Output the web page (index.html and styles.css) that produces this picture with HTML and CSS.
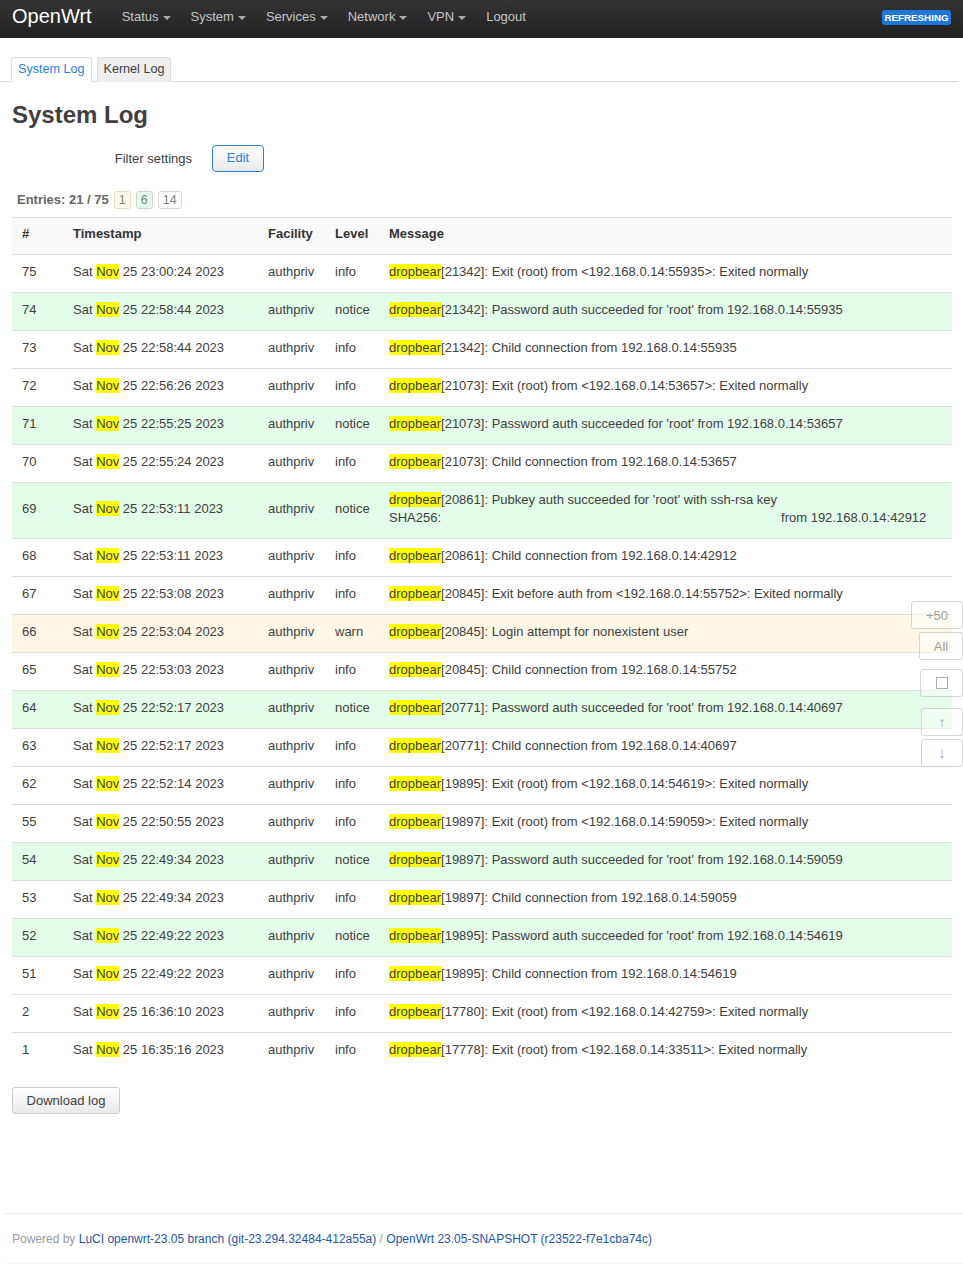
FILE: index.html
```html
<!DOCTYPE html>
<html>
<head>
<meta charset="utf-8">
<title>System Log - OpenWrt</title>
<link rel="stylesheet" href="styles.css">
</head>
<body>
<header class="topbar">
  <a class="brand" href="#">OpenWrt</a>
  <ul class="nav">
    <li><a href="#">Status<span class="caret"></span></a></li>
    <li><a href="#">System<span class="caret"></span></a></li>
    <li><a href="#">Services<span class="caret"></span></a></li>
    <li><a href="#">Network<span class="caret"></span></a></li>
    <li><a href="#">VPN<span class="caret"></span></a></li>
    <li><a href="#">Logout</a></li>
  </ul>
  <span class="refreshing">REFRESHING</span>
</header>

<div class="main">
  <ul class="tabs">
    <li class="tab active"><a href="#">System Log</a></li>
    <li class="tab"><a href="#">Kernel Log</a></li>
  </ul>

  <h2 class="title">System Log</h2>

  <div class="filter-row">
    <label class="filter-label">Filter settings</label>
    <button class="btn btn-edit">Edit</button>
  </div>

  <div class="entries">
    <span class="entries-text">Entries: 21 / 75</span>
    <span class="badge badge-warn">1</span>
    <span class="badge badge-notice">6</span>
    <span class="badge">14</span>
  </div>

  <table class="log">
    <colgroup>
      <col class="c-num"><col class="c-ts"><col class="c-fac"><col class="c-lvl"><col>
    </colgroup>
    <thead>
      <tr><th>#</th><th>Timestamp</th><th>Facility</th><th>Level</th><th>Message</th></tr>
    </thead>
    <tbody>
      <tr><td>75</td><td>Sat <mark>Nov</mark> 25 23:00:24 2023</td><td>authpriv</td><td>info</td><td><mark>dropbear</mark>[21342]: Exit (root) from &lt;192.168.0.14:55935&gt;: Exited normally</td></tr>
      <tr class="notice"><td>74</td><td>Sat <mark>Nov</mark> 25 22:58:44 2023</td><td>authpriv</td><td>notice</td><td><mark>dropbear</mark>[21342]: Password auth succeeded for 'root' from 192.168.0.14:55935</td></tr>
      <tr><td>73</td><td>Sat <mark>Nov</mark> 25 22:58:44 2023</td><td>authpriv</td><td>info</td><td><mark>dropbear</mark>[21342]: Child connection from 192.168.0.14:55935</td></tr>
      <tr><td>72</td><td>Sat <mark>Nov</mark> 25 22:56:26 2023</td><td>authpriv</td><td>info</td><td><mark>dropbear</mark>[21073]: Exit (root) from &lt;192.168.0.14:53657&gt;: Exited normally</td></tr>
      <tr class="notice"><td>71</td><td>Sat <mark>Nov</mark> 25 22:55:25 2023</td><td>authpriv</td><td>notice</td><td><mark>dropbear</mark>[21073]: Password auth succeeded for 'root' from 192.168.0.14:53657</td></tr>
      <tr><td>70</td><td>Sat <mark>Nov</mark> 25 22:55:24 2023</td><td>authpriv</td><td>info</td><td><mark>dropbear</mark>[21073]: Child connection from 192.168.0.14:53657</td></tr>
      <tr class="notice"><td>69</td><td>Sat <mark>Nov</mark> 25 22:53:11 2023</td><td>authpriv</td><td>notice</td><td><mark>dropbear</mark>[20861]: Pubkey auth succeeded for 'root' with ssh-rsa key<br>SHA256:<span class="redacted"></span>from 192.168.0.14:42912</td></tr>
      <tr><td>68</td><td>Sat <mark>Nov</mark> 25 22:53:11 2023</td><td>authpriv</td><td>info</td><td><mark>dropbear</mark>[20861]: Child connection from 192.168.0.14:42912</td></tr>
      <tr><td>67</td><td>Sat <mark>Nov</mark> 25 22:53:08 2023</td><td>authpriv</td><td>info</td><td><mark>dropbear</mark>[20845]: Exit before auth from &lt;192.168.0.14:55752&gt;: Exited normally</td></tr>
      <tr class="warn"><td>66</td><td>Sat <mark>Nov</mark> 25 22:53:04 2023</td><td>authpriv</td><td>warn</td><td><mark>dropbear</mark>[20845]: Login attempt for nonexistent user</td></tr>
      <tr><td>65</td><td>Sat <mark>Nov</mark> 25 22:53:03 2023</td><td>authpriv</td><td>info</td><td><mark>dropbear</mark>[20845]: Child connection from 192.168.0.14:55752</td></tr>
      <tr class="notice"><td>64</td><td>Sat <mark>Nov</mark> 25 22:52:17 2023</td><td>authpriv</td><td>notice</td><td><mark>dropbear</mark>[20771]: Password auth succeeded for 'root' from 192.168.0.14:40697</td></tr>
      <tr><td>63</td><td>Sat <mark>Nov</mark> 25 22:52:17 2023</td><td>authpriv</td><td>info</td><td><mark>dropbear</mark>[20771]: Child connection from 192.168.0.14:40697</td></tr>
      <tr><td>62</td><td>Sat <mark>Nov</mark> 25 22:52:14 2023</td><td>authpriv</td><td>info</td><td><mark>dropbear</mark>[19895]: Exit (root) from &lt;192.168.0.14:54619&gt;: Exited normally</td></tr>
      <tr><td>55</td><td>Sat <mark>Nov</mark> 25 22:50:55 2023</td><td>authpriv</td><td>info</td><td><mark>dropbear</mark>[19897]: Exit (root) from &lt;192.168.0.14:59059&gt;: Exited normally</td></tr>
      <tr class="notice"><td>54</td><td>Sat <mark>Nov</mark> 25 22:49:34 2023</td><td>authpriv</td><td>notice</td><td><mark>dropbear</mark>[19897]: Password auth succeeded for 'root' from 192.168.0.14:59059</td></tr>
      <tr><td>53</td><td>Sat <mark>Nov</mark> 25 22:49:34 2023</td><td>authpriv</td><td>info</td><td><mark>dropbear</mark>[19897]: Child connection from 192.168.0.14:59059</td></tr>
      <tr class="notice"><td>52</td><td>Sat <mark>Nov</mark> 25 22:49:22 2023</td><td>authpriv</td><td>notice</td><td><mark>dropbear</mark>[19895]: Password auth succeeded for 'root' from 192.168.0.14:54619</td></tr>
      <tr><td>51</td><td>Sat <mark>Nov</mark> 25 22:49:22 2023</td><td>authpriv</td><td>info</td><td><mark>dropbear</mark>[19895]: Child connection from 192.168.0.14:54619</td></tr>
      <tr><td>2</td><td>Sat <mark>Nov</mark> 25 16:36:10 2023</td><td>authpriv</td><td>info</td><td><mark>dropbear</mark>[17780]: Exit (root) from &lt;192.168.0.14:42759&gt;: Exited normally</td></tr>
      <tr><td>1</td><td>Sat <mark>Nov</mark> 25 16:35:16 2023</td><td>authpriv</td><td>info</td><td><mark>dropbear</mark>[17778]: Exit (root) from &lt;192.168.0.14:33511&gt;: Exited normally</td></tr>
    </tbody>
  </table>

  <button class="btn btn-download">Download log</button>
</div>

<div class="side-controls">
  <button class="side-btn w52">+50</button>
  <button class="side-btn w44">All</button>
  <button class="side-btn w43 gap-lg"><span class="box"></span></button>
  <button class="side-btn w42 gap-xl arrow">&#8593;</button>
  <button class="side-btn w42 arrow">&#8595;</button>
</div>

<footer class="footer">
  <span class="powered">Powered by</span>
  <a href="#">LuCI openwrt-23.05 branch (git-23.294.32484-412a55a)</a>
  <span class="sep">/</span>
  <a href="#">OpenWrt 23.05-SNAPSHOT (r23522-f7e1cba74c)</a>
</footer>
</body>
</html>
```

FILE: styles.css
```css
* { box-sizing: border-box; }

html, body {
  margin: 0;
  padding: 0;
}

body {
  font-family: "Liberation Sans", Arial, Helvetica, sans-serif;
  font-size: 13px;
  line-height: 18px;
  color: #404040;
  background: #fff;
}

a { text-decoration: none; color: #0069d6; }

/* Top bar */
.topbar {
  height: 38px;
  background: linear-gradient(#333333, #222222);
  display: flex;
  align-items: center;
  padding-left: 12px;
  position: relative;
}

.brand {
  color: #ffffff;
  font-size: 20px;
  line-height: 24px;
  margin-right: 20px;
  margin-top: -6px;
}

.nav {
  list-style: none;
  margin: 0;
  padding: 0;
  display: flex;
  margin-top: -4px;
}

.nav li a {
  display: flex;
  align-items: center;
  padding: 0 10px;
  color: #c2c6ca;
  font-size: 13px;
}

.caret {
  display: inline-block;
  width: 0;
  height: 0;
  margin-left: 4px;
  margin-top: 2px;
  border-left: 4px solid transparent;
  border-right: 4px solid transparent;
  border-top: 4px solid #a8acb0;
}

.refreshing {
  position: absolute;
  right: 12px;
  top: 10px;
  width: 69px;
  text-align: center;
  background: #1f78d9;
  color: #fff;
  font-size: 9.8px;
  font-weight: bold;
  line-height: 15px;
  border-radius: 3px;
}

/* Main */
.main {
  padding: 0 11px 0 12px;
}

.tabs {
  list-style: none;
  display: flex;
  margin: 19px -6px 0 -12px;
  padding: 0 0 0 11px;
  border-bottom: 1px solid #dddddd;
  height: 25px;
}

.tab {
  margin-right: 5px;
  height: 25px;
  border: 1px solid #dddddd;
  border-bottom: none;
  border-radius: 3px 3px 0 0;
  background: #eeeeee;
}

.tab a {
  display: block;
  padding: 0 6px;
  line-height: 23px;
  font-size: 12.6px;
  color: #404040;
}

.tab.active {
  background: #ffffff;
}

.tab.active a { color: #2a7fdc; }

.title {
  font-size: 24px;
  line-height: 30px;
  font-weight: bold;
  color: #404040;
  margin: 18px 0 0 0;
}

.filter-row {
  display: flex;
  align-items: center;
  margin-top: 15px;
}

.filter-label {
  width: 180px;
  text-align: right;
  margin-right: 20px;
}

.btn {
  font-family: "Liberation Sans", Arial, sans-serif;
  font-size: 13px;
  height: 27px;
  border-radius: 3px;
  background: linear-gradient(#ffffff, #e9e9e9);
  border: 1px solid #cccccc;
  color: #404040;
  padding: 0 14px;
  cursor: pointer;
}

.btn-edit {
  border-color: #2b7fd6;
  color: #2a7fdc;
  width: 52px;
  padding: 0;
  border-radius: 4px;
  padding-bottom: 3px;
}

.entries {
  display: flex;
  align-items: center;
  margin-top: 19px;
  padding-left: 5px;
  height: 18px;
}

.entries-text {
  font-weight: bold;
  color: #666666;
  margin-right: 5px;
}

.badge {
  display: inline-block;
  height: 18px;
  line-height: 16px;
  padding: 0 4px;
  border: 1px solid #d8d8d8;
  border-radius: 3px;
  color: #808080;
  margin-right: 5px;
  font-size: 12.5px;
  background: #ffffff;
}

.badge-warn { background: #fff7e9; border-color: #e6dcc6; }
.badge-notice { background: #e4fbeb; border-color: #c8dccb; }

/* Table */
.log {
  width: 100%;
  margin-top: 8px;
  border-collapse: collapse;
  table-layout: fixed;
}

.c-num { width: 51px; }
.c-ts { width: 195px; }
.c-fac { width: 67px; }
.c-lvl { width: 54px; }

.log th {
  text-align: left;
  font-weight: bold;
  color: #333333;
  background: #f9f9f9;
  border-top: 1px solid #dddddd;
  padding: 7px 10px 11px 10px;
  line-height: 18px;
}

.log td {
  border-top: 1px solid #dddddd;
  padding: 8px 10px 11px 10px;
  line-height: 18px;
  vertical-align: middle;
  white-space: nowrap;
}

.log td:last-child { white-space: normal; }

.log tr.notice td { background: #e2fde9; }
.log tr.warn td { background: #fef7e6; }

mark {
  background: #ffff00;
  color: #404040;
}

.redacted {
  display: inline-block;
  width: 340px;
}

.btn-download {
  margin-top: 17px;
  width: 108px;
  padding: 0;
}

/* Side controls */
.side-controls {
  position: absolute;
  top: 601px;
  right: 0;
  display: flex;
  flex-direction: column;
  align-items: flex-end;
  opacity: 0.8;
}

.side-btn {
  height: 28px;
  border: 1px solid #cccccc;
  border-radius: 3px;
  background: rgba(255, 255, 255, 0.6);
  color: #888888;
  font-family: "Liberation Sans", Arial, sans-serif;
  font-size: 13px;
  margin-top: 3px;
  padding: 0;
  display: flex;
  align-items: center;
  justify-content: center;
}

.side-btn:first-child { margin-top: 0; }

.side-btn.arrow {
  font-size: 14px;
  color: #8a8a8a;
}

.w52 { width: 52px; }
.w44 { width: 44px; }
.w43 { width: 43px; }
.w42 { width: 42px; }
.gap-lg { margin-top: 9px; }
.gap-xl { margin-top: 11px; }

.box {
  display: inline-block;
  width: 12px;
  height: 12px;
  border: 1px solid #999999;
}

/* Footer */
.footer {
  margin: 99px 0 0 4px;
  border-top: 1px solid #eeeeee;
  padding: 17px 0 16px 8px;
  font-size: 12px;
  line-height: 16px;
  color: #999999;
  border-bottom: 2px solid #f5f5f5;
}

.footer a { color: #2356a8; }
```
